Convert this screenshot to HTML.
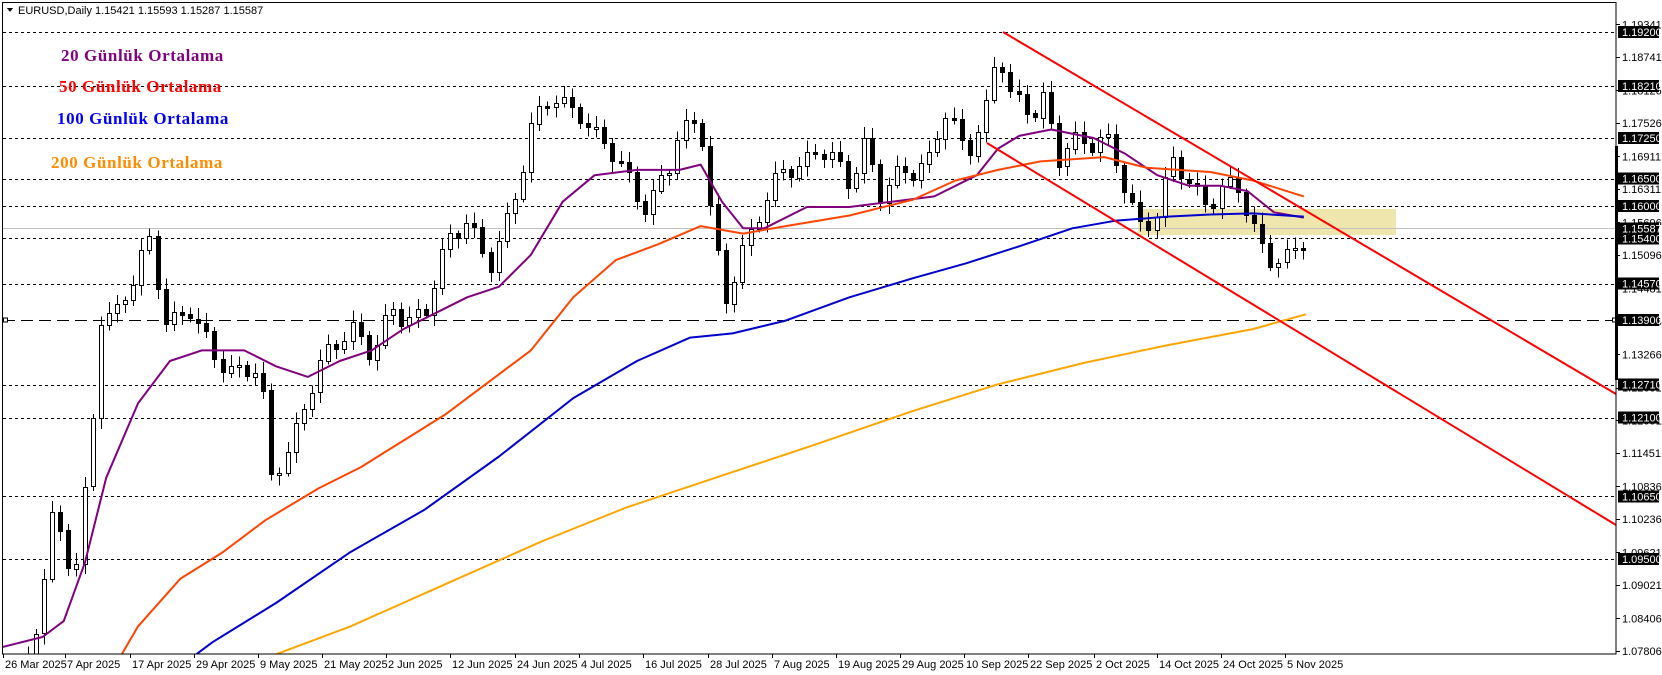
<!DOCTYPE html>
<html><head><meta charset="utf-8">
<style>
html,body{margin:0;padding:0;background:#fff;}
svg{display:block;}
.ax{font-family:"Liberation Sans",sans-serif;font-size:11px;}
.lb{font-family:"Liberation Serif",serif;font-size:17px;font-weight:bold;letter-spacing:0.6px;}
</style></head>
<body>
<svg id="s" width="1662" height="675" viewBox="0 0 1662 675" xmlns="http://www.w3.org/2000/svg" shape-rendering="crispEdges">
<defs><clipPath id="cp"><rect x="3" y="3" width="1613" height="651"/></clipPath></defs>
<rect x="0" y="0" width="1662" height="675" fill="#fff"/>
<rect x="1138" y="209" width="258" height="26" fill="#efe6ae"/>
<g id="grid"></g>
<g id="data" clip-path="url(#cp)"></g>
<line x1="1003" y1="32" x2="1616" y2="394" stroke="#ff0000" stroke-width="2" shape-rendering="auto"/>
<line x1="987" y1="143" x2="1616" y2="525" stroke="#ff0000" stroke-width="2" shape-rendering="auto"/>
<rect x="2.5" y="2.5" width="1613.5" height="651.5" fill="none" stroke="#000" stroke-width="1"/>
<rect x="1615" y="146" width="3" height="234" fill="#000"/>
<g id="axis"></g>
<path d="M7 8 L13 8 L10 12 Z" fill="#000"/>
<text x="18" y="14" class="ax" fill="#000">EURUSD,Daily  1.15421 1.15593 1.15287 1.15587</text>
<text x="61" y="61" class="lb" fill="#800080">20 Günlük Ortalama</text>
<text x="59" y="92" class="lb" fill="#ff0000">50 Günlük Ortalama</text>
<text x="57" y="124" class="lb" fill="#0000ff">100 Günlük Ortalama</text>
<text x="51" y="168" class="lb" fill="#ff8c00">200 Günlük Ortalama</text>
</svg>
<script>
(function(){
var NS="http://www.w3.org/2000/svg",K=1.0617;
function el(t,a,p){var e=document.createElementNS(NS,t);for(var k in a)e.setAttribute(k,a[k]);p.appendChild(e);return e;}
function Y(p){return 32+(1.192-p)*5432;}
var grid=document.getElementById('grid'),axis=document.getElementById('axis'),data=document.getElementById('data');
var lv=[1.192,1.1821,1.1725,1.165,1.16,1.154,1.1457,1.1271,1.121,1.1065,1.095];
lv.forEach(function(p){var y=Math.round(Y(p))+0.5;el('line',{x1:3,y1:y,x2:1616,y2:y,stroke:'#000','stroke-dasharray':'3,3'},grid);});
var y39=Math.round(Y(1.139))+0.5;
el('line',{x1:3,y1:y39,x2:1616,y2:y39,stroke:'#000','stroke-dasharray':'12,6'},grid);
el('rect',{x:3.5,y:y39-2.5,width:4,height:4,fill:'#fff',stroke:'#000'},grid);
el('rect',{x:1612.5,y:y39-2.5,width:4,height:4,fill:'#fff',stroke:'#000'},grid);
var yg=Math.round(Y(1.15587))+0.5;
el('line',{x1:3,y1:yg,x2:1616,y2:yg,stroke:'#c0c0c0'},grid);
var ticks=["1.19341","1.18741","1.18126","1.17526","1.16911","1.16311","1.15696","1.15096","1.14481","1.13866","1.13266","1.12651","1.12051","1.11451","1.10836","1.10236","1.09621","1.09021","1.08406","1.07806"];
ticks.forEach(function(t){var y=Y(parseFloat(t));el('line',{x1:1616,y1:Math.round(y)+.5,x2:1620,y2:Math.round(y)+.5,stroke:'#000'},axis);var tx=el('text',{x:1622,y:y+4,'class':'ax',fill:'#000'},axis);tx.textContent=t;});
lv.concat([1.139,1.15587]).forEach(function(p){var y=Y(p);el('rect',{x:1618,y:y-6,width:41,height:12,fill:'#000'},axis);var tx=el('text',{x:1622,y:y+4,'class':'ax',fill:'#fff'},axis);tx.textContent=p.toFixed(5);});
var dn=["26 Mar 2025","7 Apr 2025","17 Apr 2025","29 Apr 2025","9 May 2025","21 May 2025","2 Jun 2025","12 Jun 2025","24 Jun 2025","4 Jul 2025","16 Jul 2025","28 Jul 2025","7 Aug 2025","19 Aug 2025","29 Aug 2025","10 Sep 2025","22 Sep 2025","2 Oct 2025","14 Oct 2025","24 Oct 2025","5 Nov 2025"];
var dx=[3,65,130,194,258,322,386,450,515,579,643,708,772,836,900,964,1028,1094,1157,1221,1285];
dn.forEach(function(d,i){el('line',{x1:dx[i]+.5,y1:654,x2:dx[i]+.5,y2:658,stroke:'#000'},axis);var t=el('text',{x:dx[i]+2,y:668,'class':'ax',fill:'#000'},axis);t.textContent=d;});
function interp(pts,x){if(x<=pts[0][0])return pts[0][1];for(var i=1;i<pts.length;i++){if(x<=pts[i][0]){var a=pts[i-1],b=pts[i];return a[1]+(b[1]-a[1])*(x-a[0])/(b[0]-a[0]);}}return pts[pts.length-1][1];}
function line(pts,c,w){var d=pts.map(function(p,i){return (i?'L':'M')+(p[0]*K).toFixed(1)+' '+(p[1]*K).toFixed(1);}).join(' ');el('path',{d:d,fill:'none',stroke:c,'stroke-width':w,'shape-rendering':'auto','stroke-linejoin':'round'},data);}
var cp=[[0,640],[30,625],[50,480],[70,540],[85,430],[95,300],[110,290],[140,230],[155,300],[180,290],[200,340],[245,350],[255,455],[275,410],[300,350],[330,300],[350,340],[370,290],[400,300],[420,230],[440,200],[460,260],[480,200],[500,120],[520,95],[545,100],[560,130],[590,160],[610,200],[630,160],[640,120],[655,110],[665,140],[670,220],[685,290],[695,240],[715,200],[740,160],[770,140],[800,170],[815,130],[830,190],[850,160],[875,150],[890,110],[910,140],[930,100],[940,48],[950,90],[975,100],[985,90],[995,160],[1010,130],[1040,130],[1060,180],[1075,210],[1090,200],[1105,155],[1120,170],[1140,190],[1165,175],[1180,210],[1200,250],[1210,252],[1225,225]];
var prev=null;
for(var i=0;i<165;i++){var xv=3.1+i*7.65;if(xv>1228)break;var x=Math.round(xv*K);
var c=interp(cp,xv)*K+9*Math.sin(i*1.7)+6*Math.sin(i*0.9+1);
var o=prev===null?c+8:prev;prev=c;
var tp=Math.min(o,c),bt=Math.max(o,c);if(bt-tp<1.5){bt=tp+1.5;}
var hi=tp-(3+8*Math.abs(Math.sin(i*2.3))),lo=bt+(3+8*Math.abs(Math.cos(i*1.3)));
el('line',{x1:x+.5,y1:hi,x2:x+.5,y2:lo,stroke:'#000'},data);
var bull=c<o;
el('rect',{x:x-1.5,y:Math.round(tp)+.5,width:4,height:Math.max(1,Math.round(bt-tp)),fill:bull?'#fff':'#000',stroke:'#000'},data);}
line([[0,610],[40,600],[60,585],[80,530],[100,450],[130,380],[160,340],[190,330],[230,330],[260,345],[290,355],[320,340],[350,330],[380,310],[410,295],[440,280],[470,270],[500,240],[530,190],[560,165],[600,160],[640,160],[660,155],[680,190],[700,215],[720,215],[760,195],[800,195],[840,190],[880,185],[920,165],[940,140],[960,128],[990,122],[1030,130],[1060,145],[1090,165],[1120,175],[1150,175],[1175,180],[1200,200],[1228,205]],'#800080',2);
line([[95,650],[130,590],[170,545],[210,520],[250,490],[300,460],[340,440],[380,415],[420,390],[460,360],[500,330],[540,280],[580,245],[620,230],[660,213],[700,220],[740,213],[800,203],[860,188],[900,170],[940,160],[980,152],[1040,148],[1080,158],[1140,162],[1180,170],[1228,185]],'#ff4500',2);
line([[140,650],[200,605],[260,568],[330,520],[400,480],[470,430],[540,375],[600,340],[650,318],[690,314],[740,302],[800,280],[860,262],[910,248],[960,232],[1010,215],[1050,208],[1100,204],[1140,202],[1180,201],[1228,204]],'#0000cd',2);
line([[175,650],[250,620],[330,590],[420,550],[510,510],[590,478],[680,448],[770,418],[860,387],[940,362],[1020,342],[1100,325],[1180,310],[1230,296]],'#ffa500',2);
})();
</script>
</body></html>
